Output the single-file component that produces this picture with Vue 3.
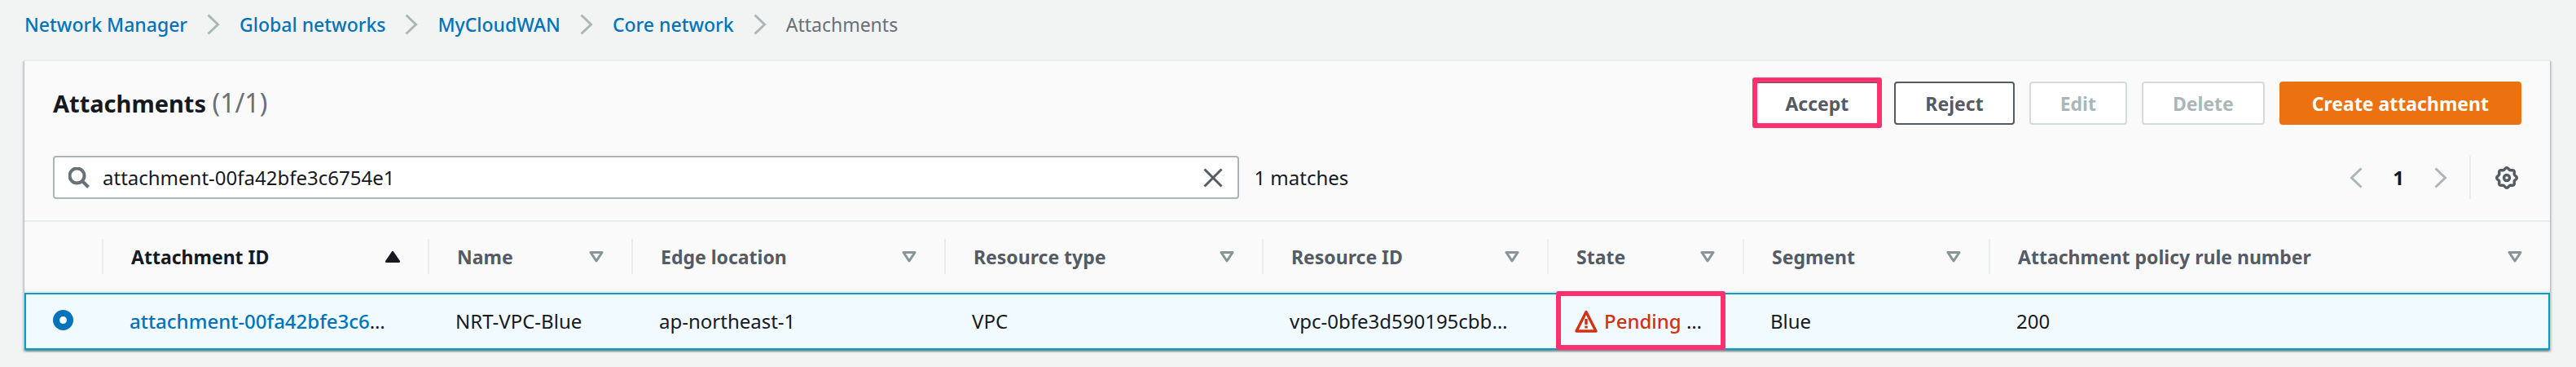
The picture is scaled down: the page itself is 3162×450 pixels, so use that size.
<script setup>
import { ref } from 'vue'

const crumbs = ['Network Manager', 'Global networks', 'MyCloudWAN', 'Core network']
const columns = [
  { key: 'id', label: 'Attachment ID', sorted: true },
  { key: 'name', label: 'Name' },
  { key: 'edge', label: 'Edge location' },
  { key: 'type', label: 'Resource type' },
  { key: 'resource', label: 'Resource ID' },
  { key: 'state', label: 'State' },
  { key: 'segment', label: 'Segment' },
  { key: 'rule', label: 'Attachment policy rule number' },
]
const query = ref('attachment-00fa42bfe3c6754e1')
const selected = ref('blue')

// Outline of an eight-toothed gear centred on 14,14
const gearPoints = Array.from({ length: 96 }, (_, i) => {
  const a = (i / 96) * Math.PI * 2
  const r = 11.2 + 1.1 * Math.cos(8 * a)
  return `${(14 + r * Math.sin(a)).toFixed(2)},${(14 - r * Math.cos(a)).toFixed(2)}`
}).join(' ')
</script>

<template>
  <div class="page">
    <nav class="crumbs" aria-label="Breadcrumbs">
      <template v-for="c in crumbs" :key="c">
        <a href="#">{{ c }}</a>
        <svg class="chevron" viewBox="0 0 16 26" aria-hidden="true"><path d="M1.5 1.5 13.5 13 1.5 24.5" /></svg>
      </template>
      <span>Attachments</span>
    </nav>

    <main class="card">
      <header class="head">
        <h1>Attachments <span>(1/1)</span></h1>
        <div class="actions">
          <button type="button" class="btn marked">Accept</button>
          <button type="button" class="btn">Reject</button>
          <button type="button" class="btn" disabled>Edit</button>
          <button type="button" class="btn" disabled>Delete</button>
          <button type="button" class="btn primary">Create attachment</button>
        </div>
      </header>

      <div class="tools">
        <div class="search">
          <svg class="lens" viewBox="0 0 26 26" aria-hidden="true"><circle cx="10.5" cy="10.5" r="9" /><path d="M17 17 24.5 24.5" /></svg>
          <input v-model="query" type="text" aria-label="Find attachments" />
          <button type="button" class="icon-btn" aria-label="Clear" @click="query = ''">
            <svg class="cross" viewBox="0 0 24 24"><path d="M1.5 1.5 22.5 22.5M22.5 1.5 1.5 22.5" /></svg>
          </button>
        </div>
        <span class="matches">1 matches</span>
        <div class="pager">
          <button type="button" class="icon-btn" aria-label="Previous page" disabled>
            <svg class="chevron" viewBox="0 0 16 26"><path d="M14.5 1.5 2.5 13 14.5 24.5" /></svg>
          </button>
          <button type="button" class="icon-btn current">1</button>
          <button type="button" class="icon-btn" aria-label="Next page" disabled>
            <svg class="chevron" viewBox="0 0 16 26"><path d="M1.5 1.5 13.5 13 1.5 24.5" /></svg>
          </button>
        </div>
        <button type="button" class="icon-btn settings" aria-label="Preferences">
          <svg class="gear" viewBox="0 0 28 28"><polygon :points="gearPoints" /><circle cx="14" cy="14" r="3.5" /></svg>
        </button>
      </div>

      <table>
        <colgroup>
          <col class="c-pick" />
          <col v-for="c in columns" :key="c.key" :class="'c-' + c.key" />
        </colgroup>
        <thead>
          <tr>
            <th scope="col"><div class="th"></div></th>
            <th v-for="c in columns" :key="c.key" scope="col" :class="{ sorted: c.sorted }">
              <div class="th">
                <span>{{ c.label }}</span>
                <svg class="sort" viewBox="0 0 18 14" aria-hidden="true">
                  <path v-if="c.sorted" d="M9 1.5 16.5 12.5H1.5Z" />
                  <path v-else d="M2 1.5H16L9 12Z" />
                </svg>
              </div>
            </th>
          </tr>
        </thead>
        <tbody>
          <tr>
            <td class="pick"><input v-model="selected" type="radio" name="attachment" value="blue" aria-label="Select attachment" /></td>
            <td><a href="#">attachment-00fa42bfe3c6</a>…</td>
            <td>NRT-VPC-Blue</td>
            <td>ap-northeast-1</td>
            <td>VPC</td>
            <td>vpc-0bfe3d590195cbb…</td>
            <td class="state">
              <div class="status">
                <svg class="warn" viewBox="0 0 28 28" aria-hidden="true">
                  <path class="tri" d="M14 2.5 26 26H2Z" />
                  <path class="bang" d="M14 11V18M14 19.5V22.5" />
                </svg>
                <span><b>Pending</b> …</span>
              </div>
            </td>
            <td>Blue</td>
            <td>200</td>
          </tr>
        </tbody>
      </table>
    </main>
  </div>
</template>

<style>
body {
  margin: 0;
  background: #f2f3f3;
}
</style>

<style scoped>
.page {
  padding: 0 32px 20px 30px;
  font-family: "Noto Sans", "Open Sans", sans-serif;
  font-size: 24px;
  line-height: 32px;
  color: #16191f;
}
* {
  box-sizing: border-box;
}
svg {
  display: block;
  flex: none;
  fill: none;
}
a {
  color: #0073bb;
  font-weight: 500;
  text-decoration: none;
}
.crumbs {
  display: flex;
  align-items: center;
  gap: 24px;
  height: 73px;
  padding-bottom: 14px;
  font-size: 23px;
  color: #687078;
}
.chevron {
  width: 16px;
  height: 26px;
  stroke: #aab7b8;
  stroke-width: 3;
}
.card {
  background: #fafafa;
  border-top: 2px solid #eaeded;
  box-shadow: 0 2px 2px rgba(0, 28, 36, 0.3), 2px 2px 2px rgba(0, 28, 36, 0.15), -2px 2px 2px rgba(0, 28, 36, 0.15);
}
.head {
  display: flex;
  align-items: center;
  justify-content: space-between;
  padding: 25px 35px 0;
}
h1 {
  margin: 0;
  font-size: 29px;
  line-height: 40px;
  font-weight: 700;
}
h1 span {
  font-size: 32px;
  font-weight: 400;
  color: #687078;
}
.actions {
  display: flex;
  gap: 18px;
}
.btn {
  position: relative;
  height: 53px;
  padding: 0 36px;
  border: 2px solid #545b64;
  border-radius: 4px;
  background: #fff;
  color: #545b64;
  font: inherit;
  font-size: 23px;
  font-weight: 700;
}
.btn:disabled {
  border-color: #d5dbdb;
  color: #aab7b8;
}
.btn.primary {
  padding: 0 38px;
  border-color: #ec7211;
  background: #ec7211;
  color: #fff;
}
.marked::after,
.state::after {
  content: "";
  position: absolute;
  border: 6px solid #ff3070;
  border-radius: 3px;
  pointer-events: none;
}
.marked::after {
  inset: -7px -5px -6px -4px;
}
.tools {
  display: flex;
  align-items: center;
  padding: 38px 35px 26px;
}
.search {
  display: flex;
  align-items: center;
  width: calc(48% + 2px);
  height: 53px;
  padding: 0 18px 0 17px;
  border: 2px solid #aab7b8;
  border-radius: 4px;
  background: #fff;
}
.search input {
  flex: 1;
  min-width: 0;
  padding: 0 0 0 16px;
  border: 0;
  outline: 0;
  background: none;
  font: inherit;
  color: inherit;
}
.lens {
  width: 26px;
  height: 26px;
  stroke: #687078;
  stroke-width: 4;
}
.cross {
  width: 24px;
  height: 24px;
  stroke: #545b64;
  stroke-width: 3;
}
.icon-btn {
  padding: 0;
  border: 0;
  background: none;
  font: inherit;
  color: inherit;
}
.matches {
  margin-left: 18px;
}
.pager {
  display: flex;
  align-items: center;
  gap: 37px;
  margin-left: auto;
  padding-right: 27px;
}
.icon-btn.current {
  font-weight: 700;
}
.icon-btn.settings {
  display: flex;
  align-items: center;
  height: 53px;
  padding: 0 4px 0 30px;
  border-left: 2px solid #eaeded;
}
.gear {
  width: 28px;
  height: 28px;
  stroke: #545b64;
  stroke-width: 3.4;
  stroke-linejoin: round;
}
table {
  width: 100%;
  table-layout: fixed;
  border-collapse: separate;
  border-spacing: 0;
}
.c-pick { width: 97px; }
.c-id { width: 400px; }
.c-name { width: 250px; }
.c-edge { width: 384px; }
.c-type { width: 390px; }
.c-resource { width: 350px; }
.c-state { width: 240px; }
.c-segment { width: 302px; }
th {
  padding: 21px 0;
  border-top: 2px solid #eaeded;
  border-bottom: 2px solid #eaeded;
  text-align: left;
  font-size: 23px;
  color: #545b64;
}
.th {
  display: flex;
  align-items: center;
  justify-content: space-between;
  height: 43px;
  padding: 0 34px;
  border-right: 2px solid #eaeded;
}
th:last-child .th {
  border-right: 0;
}
.sort {
  width: 18px;
  height: 14px;
  stroke: #879596;
  stroke-width: 3;
  stroke-linejoin: round;
}
.sorted {
  color: #16191f;
}
.sorted .sort {
  stroke: #16191f;
  fill: #16191f;
}
td {
  height: 70px;
  padding: 0 0 0 32px;
  border-top: 2px solid #00a1c9;
  border-bottom: 2px solid #00a1c9;
  background: #f1faff;
  white-space: nowrap;
}
td:first-child {
  border-left: 2px solid #00a1c9;
}
td:last-child {
  border-right: 2px solid #00a1c9;
}
.pick {
  padding: 0 0 4px 33px;
}
.pick input {
  display: block;
  appearance: none;
  width: 25px;
  height: 25px;
  margin: 0;
  border: 8px solid #0073bb;
  border-radius: 50%;
  background: #fff;
}
.state {
  position: relative;
}
.state::after {
  inset: -4px 23px -2px 9px;
}
.status {
  display: flex;
  align-items: center;
  gap: 8px;
}
.status b {
  font-weight: 500;
  color: #d13212;
}
.warn {
  width: 28px;
  height: 28px;
  stroke: #d13212;
}
.tri {
  stroke-width: 3.4;
  stroke-linejoin: round;
}
.bang {
  stroke-width: 3.4;
}
</style>
